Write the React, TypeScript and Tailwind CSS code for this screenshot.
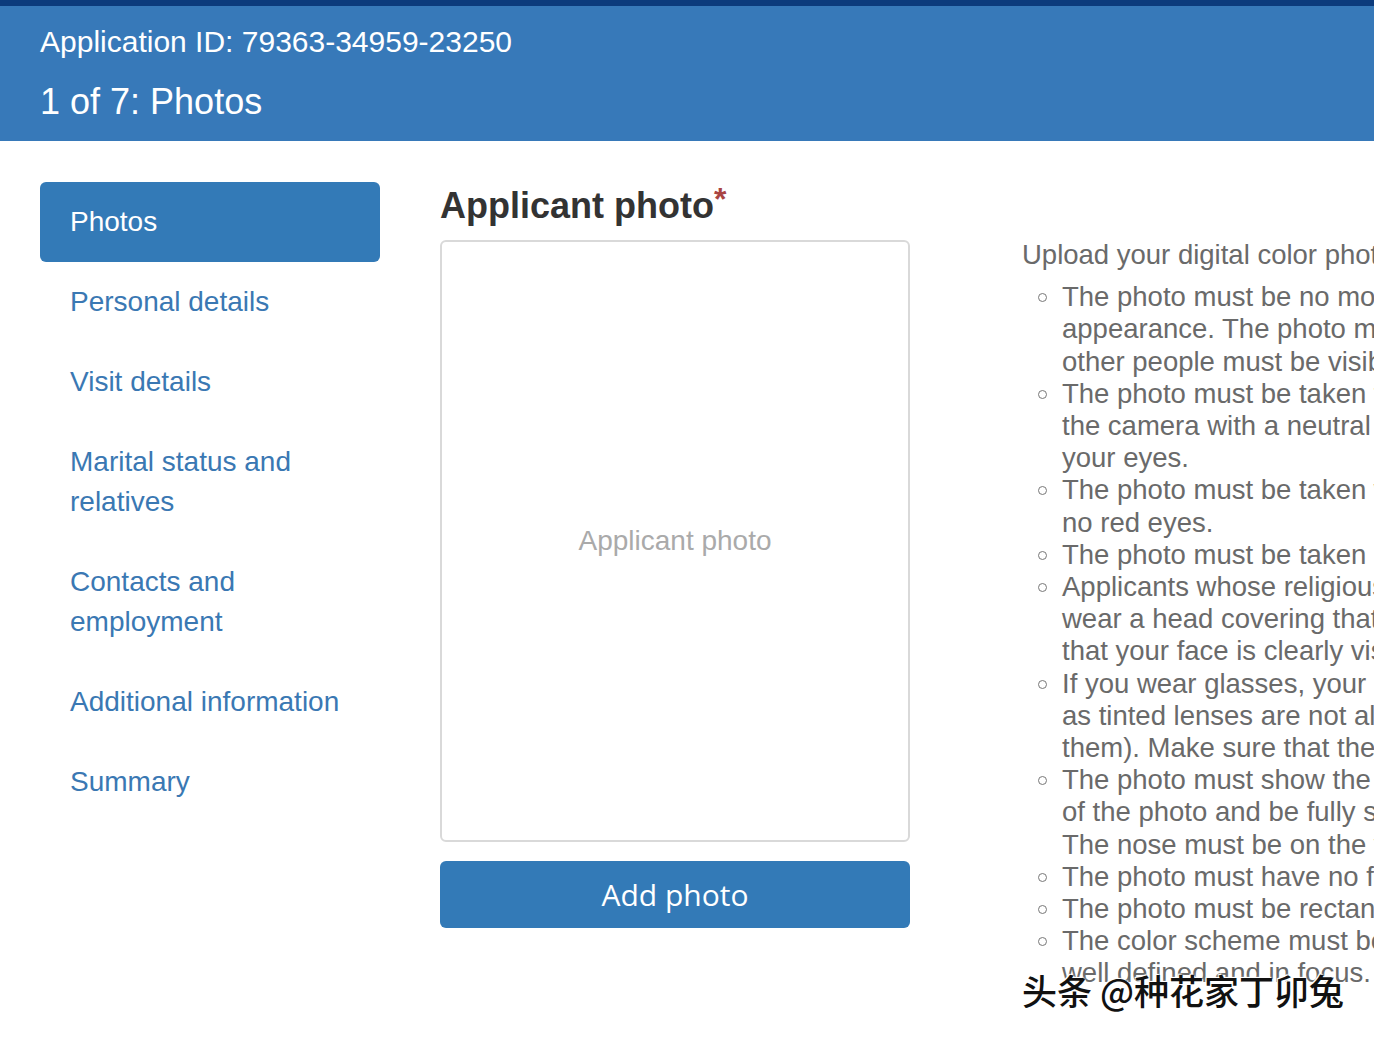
import React from "react";

const navItems = [
  "Photos",
  "Personal details",
  "Visit details",
  "Marital status and relatives",
  "Contacts and employment",
  "Additional information",
  "Summary",
];

// each requirement is kept as its visual lines, the column runs past the window edge
const requirements: string[][] = [
  [
    "The photo must be no more than 6 months old and reflect your current",
    "appearance. The photo must show only the applicant; no objects or",
    "other people must be visible in the photo.",
  ],
  [
    "The photo must be taken facing forward, looking directly into",
    "the camera with a neutral facial expression; hair must not cover",
    "your eyes.",
  ],
  [
    "The photo must be taken without flash reflections on the face and with",
    "no red eyes.",
  ],
  ["The photo must be taken against a plain light background."],
  [
    "Applicants whose religious beliefs require it are allowed to",
    "wear a head covering that does not hide the face. Make sure",
    "that your face is clearly visible.",
  ],
  [
    "If you wear glasses, your eyes must be clearly visible (dark glasses",
    "as tinted lenses are not allowed; it is better to take the photo without",
    "them). Make sure that there is no glare on the lenses.",
  ],
  [
    "The photo must show the head and top of the shoulders in the center",
    "of the photo and be fully sharp. The face must take up 70-80% of it.",
    "The nose must be on the vertical center line.",
  ],
  ["The photo must have no frames or borders."],
  ["The photo must be rectangular with an aspect ratio of 3.5 x 4.5."],
  [
    "The color scheme must be natural; the image must be",
    "well defined and in focus.",
  ],
];

export default function App() {
  return (
    <div className="relative min-h-[1041px] w-[1374px] overflow-hidden bg-white font-['Liberation_Sans',Arial,sans-serif]">
      {/* Header */}
      <div className="border-t-[6px] border-[#0c3b7c] bg-[#3779b9] px-10 pt-[18px] pb-[17px] text-white">
        <div className="text-[30px] leading-[36px]">
          Application ID: 79363-34959-23250
        </div>
        <div className="mt-5 text-[36px] leading-[44px]">1 of 7: Photos</div>
      </div>

      {/* Body */}
      <div className="flex px-10 pt-[41px]">
        {/* Side nav */}
        <div className="w-[340px] shrink-0">
          {navItems.map((item, i) => (
            <div
              key={item}
              className={
                i === 0
                  ? "rounded-md bg-[#337ab7] px-[30px] py-5 text-[28px] leading-10 text-white"
                  : "px-[30px] py-5 text-[28px] leading-10 text-[#3a78b3]"
              }
            >
              {item}
            </div>
          ))}
        </div>

        {/* Photo column */}
        <div className="ml-[60px] w-[470px] shrink-0">
          <h2 className="pt-1 text-[36px] font-bold leading-10 text-[#333]">
            Applicant photo
            <span className="relative -top-2 text-[32px] text-[#a94442]">*</span>
          </h2>
          <div className="mt-[13px] flex h-[602px] items-center justify-center rounded-md border-2 border-[#d9d9d9] bg-white">
            <span className="text-[28px] text-[#aaaaaa]">Applicant photo</span>
          </div>
          <button className="mt-[19px] h-[67px] w-full rounded-md bg-[#337ab7] font-['Open_Sans',sans-serif] text-[30px] text-white">
            Add photo
          </button>
        </div>

        {/* Requirements */}
        <div className="ml-[112px] shrink-0 whitespace-nowrap pt-[57px] text-[27.5px] leading-[32.2px] text-[#6a6a6a]">
          <p>Upload your digital color photo in JPEG format meeting the following requirements:</p>
          <ul className="mt-[10px]">
            {requirements.map((lines, i) => (
              <li key={i} className="flex">
                <span className="w-10 shrink-0">
                  <span className="ml-4 mt-3 block h-[9px] w-[9px] rounded-full border border-[#777]" />
                </span>
                <span>
                  {lines.map((line, j) => (
                    <React.Fragment key={j}>
                      {j > 0 && <br />}
                      {line}
                    </React.Fragment>
                  ))}
                </span>
              </li>
            ))}
          </ul>
        </div>
      </div>

      {/* Watermark */}
      <div className="absolute left-[1022px] top-[968px] font-['Noto_Sans_CJK_SC',sans-serif] text-[35px] font-medium leading-[44px] text-[#111] [text-shadow:0_0_3px_#fff,1px_1px_0_#fff,-1px_-1px_0_#fff]">
        头条 @种花家丁卯兔
      </div>
    </div>
  );
}
